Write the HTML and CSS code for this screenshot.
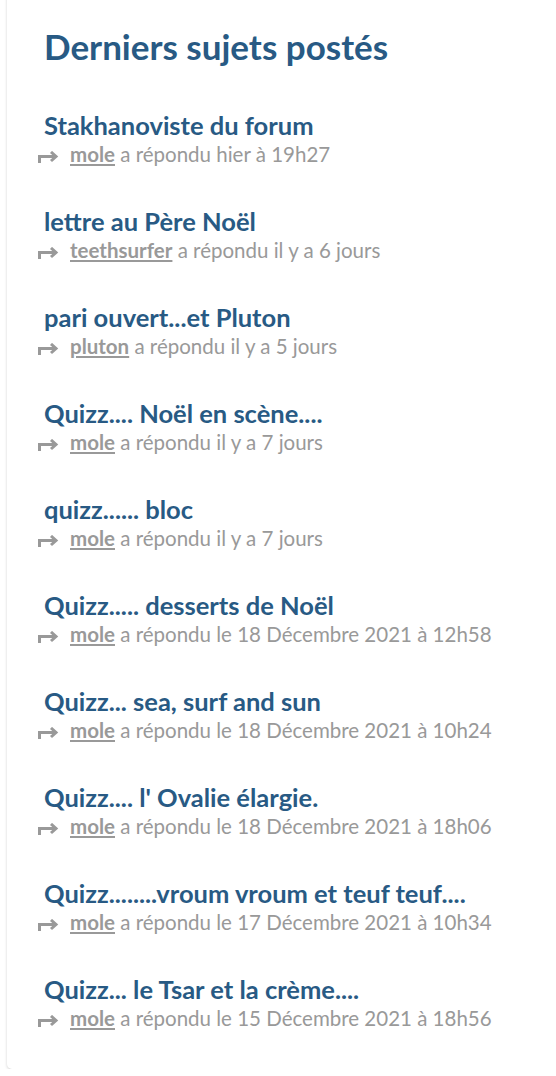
FILE: index.html
```html
<!DOCTYPE html>
<html lang="fr">
<head>
    <meta charset="UTF-8">
    <meta name="viewport" content="width=device-width, initial-scale=1.0">
    <title>Derniers sujets postés</title>
    <link rel="stylesheet" href="styles.css">
</head>
<body>
    <div class="card">
        <h2 class="card-title">Derniers sujets postés</h2>

        <ul class="topics">
            <li class="topic">
                <a class="topic-title" href="#">Stakhanoviste du forum</a>
                <div class="topic-meta">
                    <svg class="reply-icon" viewBox="0 0 22 12" width="22" height="12"><path d="M1.5 12 V5.5 H18"/><path d="M13 1 L18 5.5 L13 10"/></svg><a class="user" href="#">mole</a> a répondu hier à 19h27
                </div>
            </li>
            <li class="topic">
                <a class="topic-title" href="#">lettre au Père Noël</a>
                <div class="topic-meta">
                    <svg class="reply-icon" viewBox="0 0 22 12" width="22" height="12"><path d="M1.5 12 V5.5 H18"/><path d="M13 1 L18 5.5 L13 10"/></svg><a class="user" href="#">teethsurfer</a> a répondu il y a 6 jours
                </div>
            </li>
            <li class="topic">
                <a class="topic-title" href="#">pari ouvert...et Pluton</a>
                <div class="topic-meta">
                    <svg class="reply-icon" viewBox="0 0 22 12" width="22" height="12"><path d="M1.5 12 V5.5 H18"/><path d="M13 1 L18 5.5 L13 10"/></svg><a class="user" href="#">pluton</a> a répondu il y a 5 jours
                </div>
            </li>
            <li class="topic">
                <a class="topic-title" href="#">Quizz.... Noël en scène....</a>
                <div class="topic-meta">
                    <svg class="reply-icon" viewBox="0 0 22 12" width="22" height="12"><path d="M1.5 12 V5.5 H18"/><path d="M13 1 L18 5.5 L13 10"/></svg><a class="user" href="#">mole</a> a répondu il y a 7 jours
                </div>
            </li>
            <li class="topic">
                <a class="topic-title" href="#">quizz...... bloc</a>
                <div class="topic-meta">
                    <svg class="reply-icon" viewBox="0 0 22 12" width="22" height="12"><path d="M1.5 12 V5.5 H18"/><path d="M13 1 L18 5.5 L13 10"/></svg><a class="user" href="#">mole</a> a répondu il y a 7 jours
                </div>
            </li>
            <li class="topic">
                <a class="topic-title" href="#">Quizz..... desserts de Noël</a>
                <div class="topic-meta">
                    <svg class="reply-icon" viewBox="0 0 22 12" width="22" height="12"><path d="M1.5 12 V5.5 H18"/><path d="M13 1 L18 5.5 L13 10"/></svg><a class="user" href="#">mole</a> a répondu le 18 Décembre 2021 à 12h58
                </div>
            </li>
            <li class="topic">
                <a class="topic-title" href="#">Quizz... sea, surf and sun</a>
                <div class="topic-meta">
                    <svg class="reply-icon" viewBox="0 0 22 12" width="22" height="12"><path d="M1.5 12 V5.5 H18"/><path d="M13 1 L18 5.5 L13 10"/></svg><a class="user" href="#">mole</a> a répondu le 18 Décembre 2021 à 10h24
                </div>
            </li>
            <li class="topic">
                <a class="topic-title" href="#">Quizz.... l' Ovalie élargie.</a>
                <div class="topic-meta">
                    <svg class="reply-icon" viewBox="0 0 22 12" width="22" height="12"><path d="M1.5 12 V5.5 H18"/><path d="M13 1 L18 5.5 L13 10"/></svg><a class="user" href="#">mole</a> a répondu le 18 Décembre 2021 à 18h06
                </div>
            </li>
            <li class="topic">
                <a class="topic-title" href="#">Quizz........vroum vroum et teuf teuf....</a>
                <div class="topic-meta">
                    <svg class="reply-icon" viewBox="0 0 22 12" width="22" height="12"><path d="M1.5 12 V5.5 H18"/><path d="M13 1 L18 5.5 L13 10"/></svg><a class="user" href="#">mole</a> a répondu le 17 Décembre 2021 à 10h34
                </div>
            </li>
            <li class="topic">
                <a class="topic-title" href="#">Quizz... le Tsar et la crème....</a>
                <div class="topic-meta">
                    <svg class="reply-icon" viewBox="0 0 22 12" width="22" height="12"><path d="M1.5 12 V5.5 H18"/><path d="M13 1 L18 5.5 L13 10"/></svg><a class="user" href="#">mole</a> a répondu le 15 Décembre 2021 à 18h56
                </div>
            </li>
        </ul>
    </div>
</body>
</html>
```

FILE: styles.css
```css
body {
    margin: 0;
    background-color: #fff;
    font-family: 'Lato', 'Open Sans', sans-serif;
    overflow: hidden;
}

.card {
    margin: -10px -20px 0 7px;
    padding: 34px 20px 37px 37px;
    background-color: #fff;
    border-radius: 5px;
    box-shadow: 0 1px 3px rgba(0, 0, 0, 0.18);
}

.card-title {
    margin: 0 0 42px 0;
    font-size: 35px;
    line-height: 44px;
    font-weight: bold;
    color: #285a84;
}

.topics {
    list-style: none;
    margin: 0;
    padding: 0;
}

.topic {
    margin-bottom: 38px;
}

.topic:last-child {
    margin-bottom: 0;
}

.topic-title {
    display: block;
    font-size: 25.5px;
    line-height: 30px;
    font-weight: bold;
    color: #285a84;
    text-decoration: none;
    white-space: nowrap;
}

.topic-meta {
    margin-left: -6px;
    font-size: 20.5px;
    line-height: 28px;
    height: 28px;
    color: #999;
    white-space: nowrap;
}

.reply-icon {
    margin-right: 10px;
    vertical-align: -1px;
    fill: none;
    stroke: #999;
    stroke-width: 3;
}

.user {
    color: #999;
    font-weight: bold;
}
```
